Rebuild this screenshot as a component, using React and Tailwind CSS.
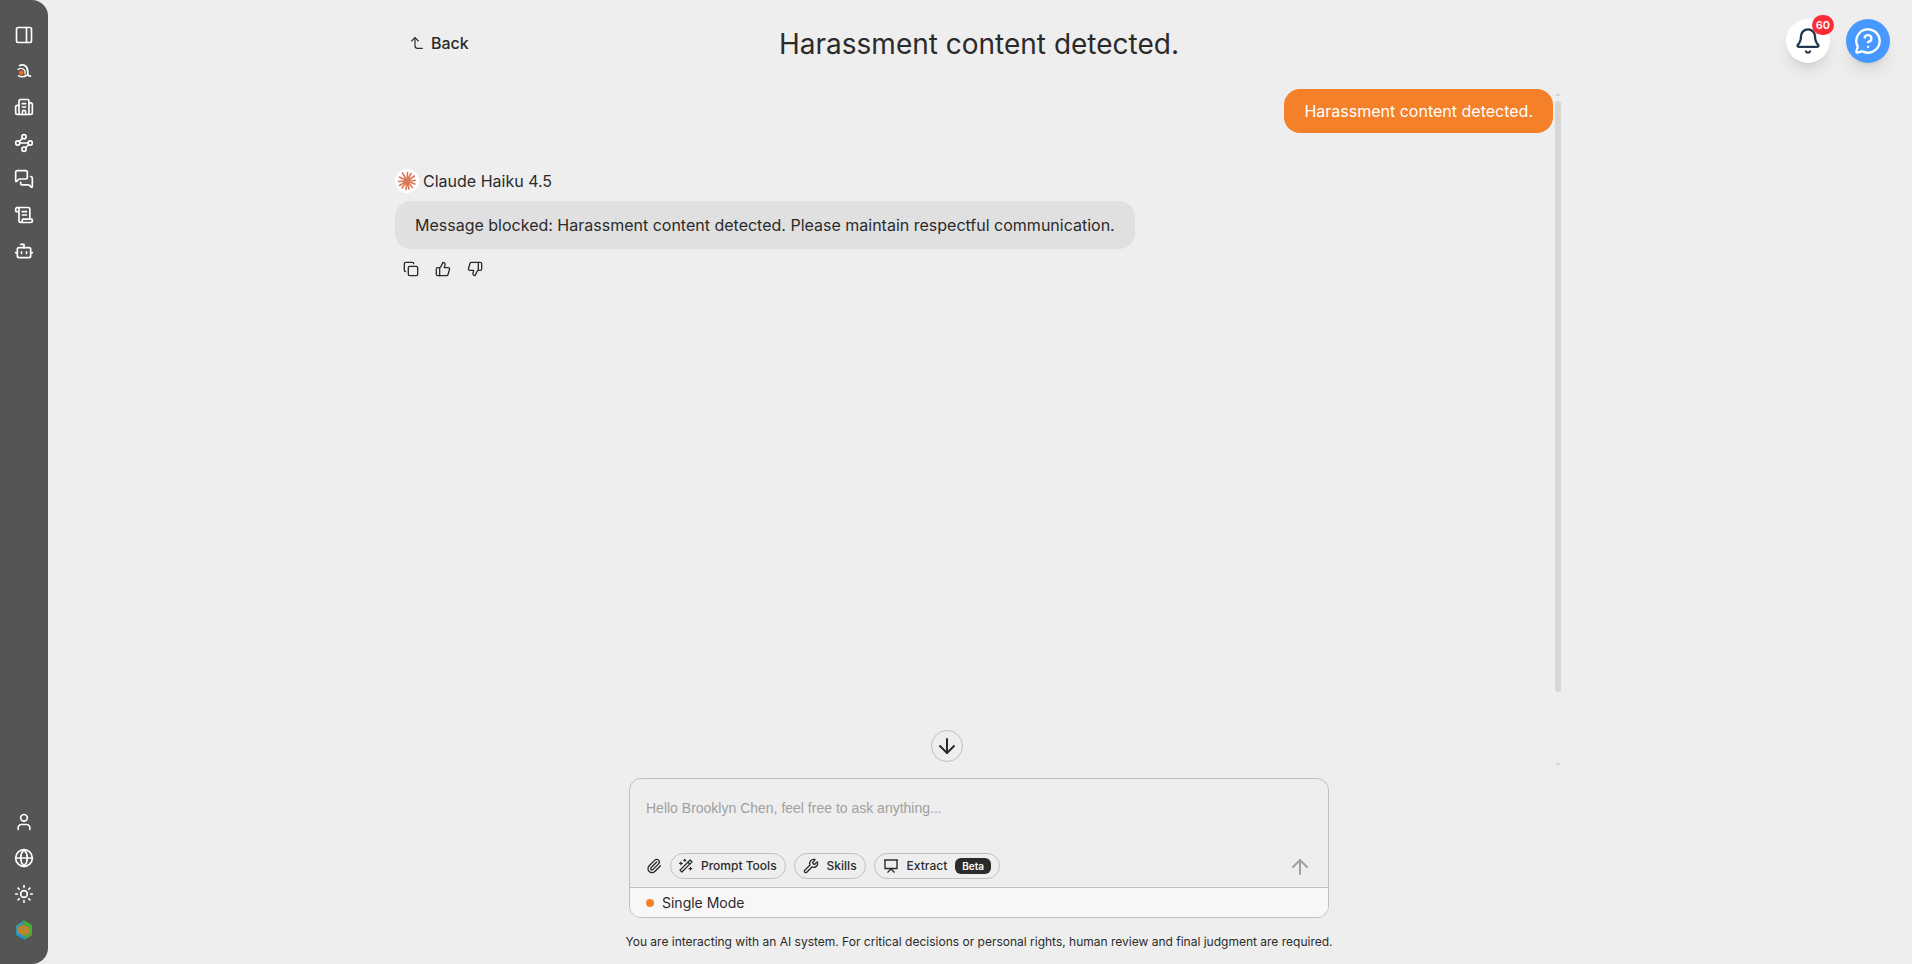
import { useState } from 'react';
import {
  ArrowDown,
  ArrowUp,
  Bell,
  Bot,
  Building2,
  Copy,
  CornerLeftUp,
  Globe,
  MessageCircleQuestionMark,
  MessagesSquare,
  PanelRight,
  Paperclip,
  ScrollText,
  Sun,
  ThumbsDown,
  ThumbsUp,
  User,
  Waypoints,
  Wrench,
} from 'lucide-react';

const BrandLogo = () => (
  <svg width="20" height="20" viewBox="0 0 20 20" fill="none" stroke="white" strokeLinecap="round">
    <path d="M5.500 4.600Q8 3 10.800 4.500Q13.800 6.500 13.800 10.500V13Q14 15.200 16.500 15.200" strokeWidth="1.700" />
    <path d="M4 8.500Q6.500 6.500 9.300 8Q12 10 11 13" strokeWidth="1.200" />
    <path d="M4.500 14.800Q8.500 17 13.300 14" strokeWidth="1.500" />
    <circle cx="7.200" cy="11.800" r="2.300" fill="#f26a1b" stroke="none" />
  </svg>
);

const HexLogo = () => (
  <svg width="20" height="20" viewBox="0 0 20 20">
    <path d="M9.500 0l8.500 5v10l-4 2V7L9.500 4z" fill="#3fae3a" />
    <path d="M2 9l3 3 6 4.500V20l-9-5z" fill="#1f96c4" />
    <path d="M9.500 0v5L5 8l-3 1V5.500L7 2.500z" fill="#3d98a0" />
    <path d="M18 12v3l-7 4.500V14z" fill="#5aa03a" />
    <path d="M10 4.500l6 3.500v4l-6 4-7-4V8z" fill="#c08428" />
    <path d="M3 8.500h13M3 12h13" stroke="#a98a38" strokeWidth="1" />
  </svg>
);

const ClaudeIcon = () => (
  <svg width="20" height="20" viewBox="0 0 20 20" stroke="#d97757" strokeWidth="1.600" strokeLinecap="round">
    <path d="M10 10L10.500 1.500M10 10L14 2.500M10 10L17.500 5M10 10L18.500 9.500M10 10L18 13M10 10L15.500 16.500M10 10L12 18M10 10L9 18.500M10 10L5 17M10 10L2.500 14.500M10 10L1.500 10.500M10 10L2.500 6M10 10L5.500 2" />
  </svg>
);

const WandIcon = () => (
  <svg width="14" height="16" viewBox="1 0 22 24" fill="none" stroke="currentColor" strokeWidth="2" strokeLinecap="round" strokeLinejoin="round">
    <path d="M2.500 18.500L18.500 2.500l3 3L5.500 21.500z" />
    <path d="M15 6l3 3" />
    <path d="M10 1.500v3M8.500 3h3M4 6v4M2 8h4M19 14v4M17 16h4" />
  </svg>
);

const BoardIcon = () => (
  <svg width="16" height="16" viewBox="0 0 16 16" fill="none" stroke="currentColor" strokeWidth="1.400">
    <path d="M1 2h14M2 2v8.500h12V2M8 10.500v1.500M8 11L4.500 14.500M8 11l3.500 3.500" />
  </svg>
);

const topItems = [
  { label: 'Toggle sidebar', icon: PanelRight },
  { label: 'Home', icon: BrandLogo },
  { label: 'Organization', icon: Building2 },
  { label: 'Workflows', icon: Waypoints },
  { label: 'Chats', icon: MessagesSquare },
  { label: 'Prompts', icon: ScrollText },
  { label: 'Agents', icon: Bot },
];

const bottomItems = [
  { label: 'Profile', icon: User },
  { label: 'Language', icon: Globe },
  { label: 'Theme', icon: Sun },
  { label: 'Workspace', icon: HexLogo },
];

const NavList = ({ items }) => (
  <div className="flex flex-col items-center gap-4">
    {items.map(({ label, icon: Icon }) => (
      <button key={label} type="button" aria-label={label} className="cursor-pointer">
        <Icon size={20} />
      </button>
    ))}
  </div>
);

const ToolButton = ({ children }) => (
  <button
    type="button"
    className="flex h-[26px] items-center gap-2 rounded-full border border-[#c0c0c0] px-2 text-xs font-medium"
  >
    {children}
  </button>
);

const App = () => {
  const [message, setMessage] = useState('');

  return (
    <div className="flex h-screen bg-[#eeeeee] font-['Inter',sans-serif] text-[#2b2b2b]">
      <nav className="flex w-12 shrink-0 flex-col justify-between rounded-r-2xl bg-[#555555] pt-[25px] pb-6 text-white">
        <NavList items={topItems} />
        <NavList items={bottomItems} />
      </nav>

      <main className="relative flex min-w-0 flex-1 flex-col items-center pr-[2px]">
        <header className="grid w-full max-w-[1168px] grid-cols-[1fr_auto_1fr] items-center pt-6 pb-5">
          <button type="button" className="flex items-center gap-1.5 justify-self-start pb-0.5 pl-3.5 font-medium">
            <CornerLeftUp size={16} strokeWidth={1.75} />
            Back
          </button>
          <h1 className="text-[28px] leading-10">Harassment content detected.</h1>
        </header>

        <div className="absolute top-[19px] right-[22px] flex gap-4">
          <button
            type="button"
            aria-label="Notifications"
            className="relative flex size-11 items-center justify-center rounded-full bg-white text-[#24364f] shadow-lg"
          >
            <Bell size={28} />
            <span className="absolute -top-1 -right-1 flex h-5 items-center rounded-full bg-[#fb2c36] px-1 text-[11px] font-semibold text-white">
              60
            </span>
          </button>
          <button
            type="button"
            aria-label="Help"
            className="flex size-11 items-center justify-center rounded-full bg-[#4799ff] text-white shadow-lg"
          >
            <MessageCircleQuestionMark size={28} />
          </button>
        </div>

        <section className="flex min-h-0 w-full max-w-[1168px] flex-1 pt-1 pr-[2px]">
          <div className="min-w-0 flex-1">
            <div className="flex justify-end">
              <p className="mt-px rounded-2xl bg-[#f5802a] px-5 py-[10px] text-white">Harassment content detected.</p>
            </div>
            <div className="mt-9 flex items-center gap-1">
              <span className="flex size-6 items-center justify-center rounded-full bg-white">
                <ClaudeIcon />
              </span>
              <span>Claude Haiku 4.5</span>
            </div>
            <p className="mt-2 w-fit rounded-2xl bg-[#e0e0e0] px-5 py-3">
              Message blocked: Harassment content detected. Please maintain respectful communication.
            </p>
            <div className="mt-3 flex gap-4 pl-2">
              <button type="button" aria-label="Copy"><Copy size={16} /></button>
              <button type="button" aria-label="Good response"><ThumbsUp size={16} /></button>
              <button type="button" aria-label="Bad response"><ThumbsDown size={16} /></button>
            </div>
          </div>
          <div className="flex w-2 flex-col items-end pt-[5px]">
            <svg width="6" height="3" viewBox="0 0 6 3" fill="#d4d4d4"><path d="M3 0l3 3H0z" /></svg>
            <div className="mt-[5px] h-[591px] max-h-[88%] w-[6px] rounded-full bg-[#d6d6d6]" />
            <svg className="mt-auto" width="6" height="3" viewBox="0 0 6 3" fill="#d4d4d4"><path d="M3 3l3-3H0z" /></svg>
          </div>
        </section>

        <div className="relative mt-3 w-full max-w-[700px]">
          <button
            type="button"
            aria-label="Scroll to bottom"
            className="absolute -top-12 left-[302px] flex size-8 items-center justify-center rounded-full border border-[#c0c0c0]"
          >
            <ArrowDown size={24} />
          </button>
          <form
            className="overflow-hidden rounded-xl border border-[#c0c0c0]"
            onSubmit={(e) => e.preventDefault()}
          >
            <textarea
              aria-label="Message"
              rows={1}
              value={message}
              onChange={(e) => setMessage(e.target.value)}
              placeholder="Hello Brooklyn Chen, feel free to ask anything..."
              className="mt-4 block h-14 w-full resize-none px-4 font-['Liberation_Sans',sans-serif] text-sm leading-[26px] outline-none placeholder:text-[#a0a0a0]"
            />
            <div className="flex items-center gap-2 px-4 pt-[2px] pb-2">
              <button type="button" aria-label="Attach file"><Paperclip size={16} /></button>
              <ToolButton><WandIcon />Prompt Tools</ToolButton>
              <ToolButton><Wrench size={16} />Skills</ToolButton>
              <ToolButton>
                <BoardIcon />
                Extract
                <span className="rounded-md bg-[#2b2b2b] px-[7px] text-[10px] leading-4 font-semibold text-white">Beta</span>
              </ToolButton>
              <button type="submit" aria-label="Send" className="ml-auto pt-0.5 text-[#a0a0a0]"><ArrowUp size={24} /></button>
            </div>
            <div className="flex items-center gap-2 border-t border-[#c0c0c0] bg-[#f7f7f7] px-4 py-1 text-sm leading-[21px]">
              <span className="size-2 rounded-full bg-[#f5802a]" />
              Single Mode
            </div>
          </form>
        </div>
        <p className="pt-4 pb-[14px] text-xs">
          You are interacting with an AI system. For critical decisions or personal rights, human review and final judgment are required.
        </p>
      </main>
    </div>
  );
};

export default App;
